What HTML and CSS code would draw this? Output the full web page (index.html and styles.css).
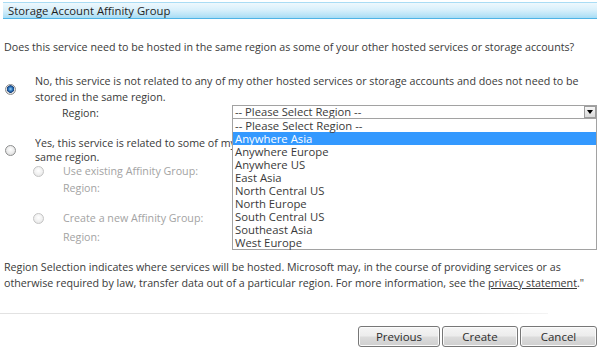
FILE: index.html
```html
<!DOCTYPE html>
<html>
<head>
<meta charset="utf-8">
<link rel="stylesheet" href="styles.css">
</head>
<body>
<div class="page">
  <div class="header">Storage Account Affinity Group</div>

  <p class="question">Does this service need to be hosted in the same region as some of your other hosted services or storage accounts?</p>

  <div class="option opt1">
    <span class="radio checked"></span>
    <div class="opt-body">
      <div class="opt-text">No, this service is not related to any of my other hosted services or storage accounts and does not need to be<br>stored in the same region.</div>
      <div class="region-row">
        <span class="region-label">Region:</span>
        <div class="select-wrap">
          <div class="select">
            <span class="select-value">-- Please Select Region --</span>
            <span class="select-btn"><svg width="6" height="4" viewBox="0 0 6 4"><path d="M0 0H6L3 4Z" fill="#000"/></svg></span>
          </div>
          <ul class="droplist">
            <li>-- Please Select Region --</li>
            <li class="hl">Anywhere Asia</li>
            <li>Anywhere Europe</li>
            <li>Anywhere US</li>
            <li>East Asia</li>
            <li>North Central US</li>
            <li>North Europe</li>
            <li>South Central US</li>
            <li>Southeast Asia</li>
            <li>West Europe</li>
          </ul>
        </div>
      </div>
    </div>
  </div>

  <div class="option opt2">
    <span class="radio"></span>
    <div class="opt-body">
      <div class="opt-text"><span class="clip-line">Yes, this service is related to some of my other hosted services or storage accounts and needs to be stored in the</span><br>same region.</div>
    </div>
  </div>

  <div class="sub sub1">
    <span class="radio disabled"></span>
    <div class="sub-body">
      <div class="sub-row"><span class="sub-label">Use existing Affinity Group:</span><span class="dis-select"></span></div>
      <div class="sub-row">Region:</div>
    </div>
  </div>

  <div class="sub sub2">
    <span class="radio disabled"></span>
    <div class="sub-body">
      <div class="sub-row"><span class="sub-label">Create a new Affinity Group:</span><span class="dis-select"></span></div>
      <div class="sub-row region2">Region:</div>
    </div>
  </div>

  <p class="note">Region Selection indicates where services will be hosted. Microsoft may, in the course of providing services or as<br>otherwise required by law, transfer data out of a particular region. For more information, see the <a href="#">privacy statement</a>."</p>

  <div class="separator"></div>

  <div class="buttons">
    <button class="btn btn-prev">Previous</button>
    <button class="btn btn-create">Create</button>
    <button class="btn btn-cancel">Cancel</button>
  </div>
</div>
</body>
</html>
```
FILE: styles.css
```css
html, body {
  margin: 0;
  padding: 0;
  background: #fff;
}
body {
  width: 599px;
  height: 348px;
  overflow: hidden;
  font-family: "Open Sans", "Liberation Sans", sans-serif;
  font-size: 10.7px;
  line-height: 16px;
  color: #3a3a3a;
}
.page {
  padding-top: 2px;
}
.header {
  margin: 0 2px 0 3px;
  height: 15px;
  padding-left: 5px;
  line-height: 15px;
  font-size: 11.3px;
  color: #1e1e1e;
  border-top: 1px solid #a9dcf4;
  border-bottom: 1px solid #4fb4e6;
  background: linear-gradient(#eef8fd 0%, #d9f0fb 45%, #bfe6f8 75%, #a6dcf5 100%);
}
.question {
  margin: 20px 0 0 4px;
  white-space: nowrap;
}
.option {
  display: flex;
  align-items: flex-start;
}
.opt1 {
  margin-top: 18px;
}
.opt2 {
  margin-top: 15px;
}
.radio {
  flex: none;
  width: 9px;
  height: 9px;
  border-radius: 50%;
  border: 1px solid #8e8f8f;
  background: radial-gradient(circle at 50% 40%, #ffffff 0%, #eaeaea 55%, #cfcfcf 100%);
  box-sizing: content-box;
}
.option .radio {
  margin: 11px 19px 0 5px;
}
.opt2 .radio {
  margin-top: 9px;
}
.radio.checked {
  background:
    radial-gradient(circle at 50% 45%, #9fd2f5 0px, #2f79c0 2px, #173f7a 3.5px, transparent 4px),
    radial-gradient(circle at 50% 40%, #ffffff 0%, #e6e6e6 60%, #cdcdcd 100%);
}
.radio.disabled {
  border-color: #c4c4c4;
  background: radial-gradient(circle at 50% 40%, #ffffff 0%, #f0f0f0 55%, #dedede 100%);
}
.opt-body {
  flex: 1;
}
.opt-text {
  white-space: nowrap;
}
.opt2 .opt-text {
  line-height: 14px;
}
.clip-line {
  display: inline-block;
  vertical-align: top;
  width: 197px;
  overflow: hidden;
}
.region-row {
  display: flex;
  align-items: flex-start;
  margin-left: 27px;
}
.region-label {
  width: 170px;
  flex: none;
}
.select-wrap {
  position: relative;
  width: 365px;
  z-index: 2;
}
.select {
  display: flex;
  align-items: center;
  justify-content: space-between;
  height: 12px;
  border: 1px solid #a2a2a2;
  background: #fff;
  line-height: 12px;
  font-size: 11.2px;
}
.select-value {
  padding-left: 2px;
}
.select-btn {
  display: flex;
  align-items: center;
  justify-content: center;
  width: 10px;
  height: 10px;
  margin-right: 0;
  border: 1px solid #9c9c9c;
  background: linear-gradient(#f6f6f6, #dadada);
}
.droplist {
  position: absolute;
  left: 0;
  top: 13px;
  width: 363px;
  margin: 0;
  padding: 0;
  list-style: none;
  border: 1px solid #a2a2a2;
  background: #fff;
}
.droplist li {
  height: 13px;
  line-height: 13px;
  padding-left: 2px;
  font-size: 11.3px;
  white-space: nowrap;
}
.droplist li.hl {
  background: #3399ff;
  color: #fff;
}
.sub {
  display: flex;
  align-items: flex-start;
  color: #a3a3a3;
}
.sub .radio {
  margin: 3px 19px 0 33px;
}
.sub1 {
  margin-top: -1px;
}
.sub2 {
  margin-top: 14px;
}
.sub-row {
  display: flex;
  white-space: nowrap;
}
.sub-label {
  width: 170px;
  flex: none;
}
.dis-select {
  width: 300px;
  height: 15px;
  border: 1px solid #7a7a7a;
  background: #fff;
}
.region2 {
  margin-top: 2px;
}
.note {
  margin: 14px 0 0 4px;
  white-space: nowrap;
}
.note a {
  color: #3a3a3a;
  text-decoration: underline;
}
.separator {
  margin-top: 22px;
  width: 548px;
  height: 1px;
  background: linear-gradient(to right, #e2e2e2 0%, #e2e2e2 85%, #f4f4f4 100%);
}
.buttons {
  display: flex;
  justify-content: flex-end;
  gap: 2px;
  margin: 12px 2px 0 0;
}
.btn {
  height: 21px;
  padding: 0;
  font-family: "Open Sans", "Liberation Sans", sans-serif;
  font-size: 11.5px;
  color: #2d2d2d;
  border: 1px solid #777;
  border-radius: 3px;
  background: linear-gradient(#f5f5f5 0%, #ececec 48%, #dcdcdc 52%, #cfcfcf 100%);
  box-shadow: inset 0 0 0 1px #fbfbfb;
}
.btn-prev { width: 82px; }
.btn-create { width: 76px; }
.btn-cancel { width: 77px; }
```
